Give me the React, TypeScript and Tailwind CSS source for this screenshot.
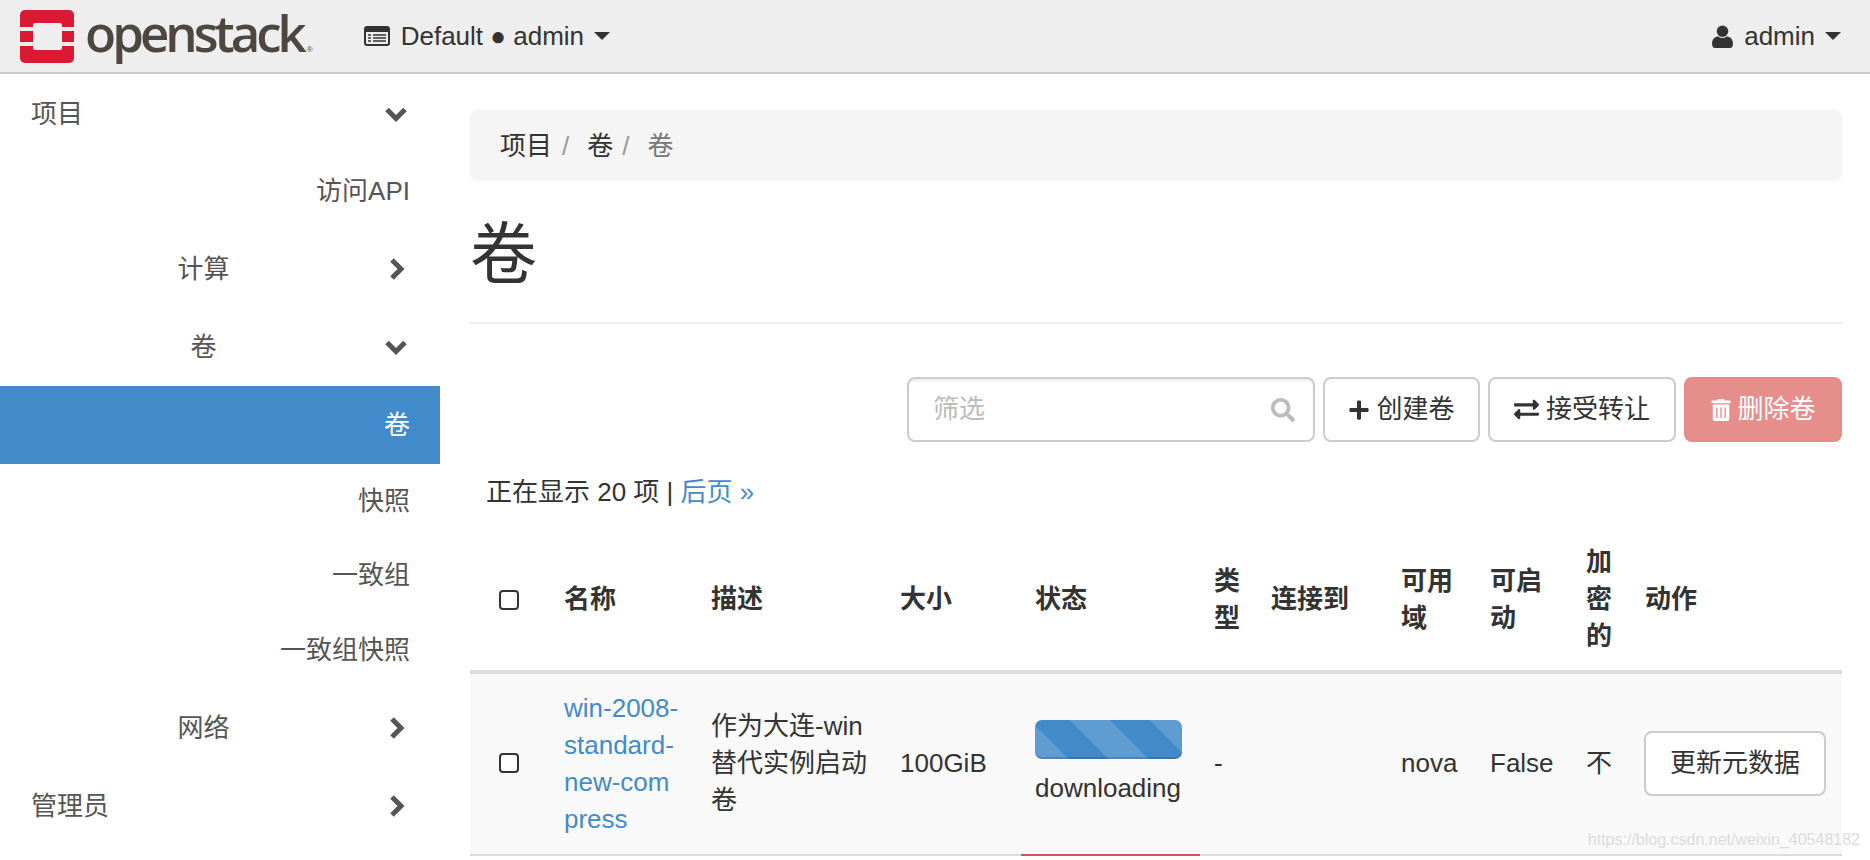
import { FaExchangeAlt, FaPlus, FaSearch, FaTrashAlt } from "react-icons/fa";

const ChevronDown = () => (
  <svg width="24" height="16" viewBox="0 0 24 16" className="shrink-0">
    <polyline points="3,3.5 12,12.5 21,3.5" fill="none" stroke="#555" strokeWidth="5" />
  </svg>
);

const ChevronRight = () => (
  <svg width="24" height="24" viewBox="0 0 24 24" className="shrink-0">
    <polyline points="8,3 17,12 8,21" fill="none" stroke="#555" strokeWidth="5" />
  </svg>
);

const Caret = () => (
  <span className="inline-block h-0 w-0 border-x-[8px] border-t-[8px] border-x-transparent border-t-[#333]" />
);

const Logo = () => (
  <svg width="54" height="53" viewBox="0 0 54 53" className="shrink-0">
    <rect x="0" y="0" width="54" height="53" rx="5" fill="#da1a32" />
    <rect x="13" y="13" width="29" height="27" rx="2" fill="#eee" />
    <rect x="0" y="17" width="14" height="4" fill="#eee" />
    <rect x="0" y="32" width="14" height="4" fill="#eee" />
    <rect x="41" y="17" width="13" height="4" fill="#eee" />
    <rect x="41" y="32" width="13" height="4" fill="#eee" />
  </svg>
);

const ListIcon = () => (
  <svg width="26" height="20" viewBox="0 0 26 20" className="shrink-0">
    <rect x="1" y="1" width="24" height="18" rx="2" fill="none" stroke="#333" strokeWidth="2" />
    <rect x="1" y="1" width="24" height="5" fill="#333" />
    <path d="M4 9h3M4 12h3M4 15h3M9 9h13M9 12h13M9 15h13" stroke="#333" strokeWidth="1.6" />
  </svg>
);

const UserIcon = () => (
  <svg width="21" height="23" viewBox="0 0 20 22" className="shrink-0">
    <circle cx="10" cy="6" r="5.5" fill="#333" />
    <path d="M0 18C0 13 3 11 6 11Q10 14 14 11C17 11 20 13 20 18Q20 22 17 22H3Q0 22 0 18Z" fill="#333" />
  </svg>
);

const Checkbox = () => (
  <input type="checkbox" className="block h-5 w-5 appearance-none rounded-[4px] border-2 border-[#333] bg-white" />
);

const subItemClass = "flex items-center justify-end pr-[30px] text-[#555]";

const Sidebar = () => (
  <aside className="mt-px w-[440px] shrink-0 text-[26px] leading-[37px]">
    <div className="flex h-[78px] items-center justify-between pl-[31px] pr-[32px] text-[#555]">
      <span>项目</span>
      <ChevronDown />
    </div>
    <div className={`h-[77px] ${subItemClass}`}>访问API</div>
    <div className="flex h-[78px] items-center pr-[32px] text-[#555]">
      <span className="flex-1 pl-[23px] text-center">计算</span>
      <ChevronRight />
    </div>
    <div className="flex h-[78px] items-center pr-[32px] text-[#555]">
      <span className="flex-1 pl-[23px] text-center">卷</span>
      <ChevronDown />
    </div>
    <div className="flex h-[78px] items-center justify-end bg-[#428bca] pr-[30px] text-white">卷</div>
    <div className={`h-[74px] ${subItemClass}`}>快照</div>
    <div className={`h-[74px] ${subItemClass}`}>一致组</div>
    <div className={`h-[77px] ${subItemClass}`}>一致组快照</div>
    <div className="flex h-[78px] items-center pr-[32px] text-[#555]">
      <span className="flex-1 pl-[23px] text-center">网络</span>
      <ChevronRight />
    </div>
    <div className="flex h-[78px] items-center justify-between pl-[31px] pr-[32px] text-[#555]">
      <span>管理员</span>
      <ChevronRight />
    </div>
  </aside>
);

const headers = ["名称", "描述", "大小", "状态", "类型", "连接到", "可用域", "可启动", "加密的", "动作"];

const VolumeTable = () => (
  <table className="mt-[19px] w-full table-fixed border-collapse text-left">
    <colgroup>
      <col className="w-[80px]" />
      <col className="w-[147px]" />
      <col className="w-[189px]" />
      <col className="w-[135px]" />
      <col className="w-[179px]" />
      <col className="w-[57px]" />
      <col className="w-[130px]" />
      <col className="w-[89px]" />
      <col className="w-[96px]" />
      <col className="w-[59px]" />
      <col className="w-[211px]" />
    </colgroup>
    <thead>
      <tr className="border-b-4 border-[#ddd]">
        <th className="pt-[14px] pb-[15px] pl-[29px]">
          <Checkbox />
        </th>
        {headers.map((h) => (
          <th key={h} className="px-[14px] pt-[14px] pb-[15px] font-bold">
            {h}
          </th>
        ))}
      </tr>
    </thead>
    <tbody>
      <tr className="bg-[#f9f9f9]">
        <td className="border-b-2 border-[#ddd] pb-[2px] pl-[29px]">
          <Checkbox />
        </td>
        <td className="border-b-2 border-[#ddd] px-[14px] py-[16px] text-[#428bca]">
          win-2008-
          <br />
          standard-
          <br />
          new-com
          <br />
          press
        </td>
        <td className="border-b-2 border-[#ddd] px-[14px] pb-[2px]">作为大连-win替代实例启动卷</td>
        <td className="border-b-2 border-[#ddd] px-[14px] pb-[2px]">100GiB</td>
        <td className="border-b-2 border-[#d9534f] px-[14px] pb-[2px]">
          <div className="h-[39px] w-[147px] rounded-[7px] bg-[#428bca] bg-[linear-gradient(45deg,rgba(255,255,255,.15)_25%,transparent_25%,transparent_50%,rgba(255,255,255,.15)_50%,rgba(255,255,255,.15)_75%,transparent_75%,transparent)] bg-[length:80px_80px] bg-[position:35px_0] shadow-[inset_0_-2px_0_rgba(0,0,0,0.15)]" />
          <div className="mt-[11px] whitespace-nowrap">downloading</div>
        </td>
        <td className="border-b-2 border-[#ddd] px-[14px] pb-[2px]">-</td>
        <td className="border-b-2 border-[#ddd] px-[14px]"></td>
        <td className="border-b-2 border-[#ddd] px-[14px] pb-[2px]">nova</td>
        <td className="border-b-2 border-[#ddd] px-[14px] pb-[2px]">False</td>
        <td className="border-b-2 border-[#ddd] px-[14px] pb-[2px]">不</td>
        <td className="border-b-2 border-[#ddd] pr-[14px] pb-[2px] pl-[13px]">
          <button className="h-[65px] w-[182px] rounded-[8px] border-2 border-[#ccc] bg-white text-[#333]">
            更新元数据
          </button>
        </td>
      </tr>
    </tbody>
  </table>
);

const App = () => {
  return (
    <div className="relative h-[860px] w-[1870px] overflow-hidden bg-white font-['Liberation_Sans','Noto_Sans_CJK_SC',sans-serif] text-[26px] leading-[37px] text-[#333]">
      {/* Top bar */}
      <header className="flex h-[74px] items-center border-b-2 border-[#ccc] bg-[#eee] pr-[29px] pl-[20px]">
        <Logo />
        <div className="mb-[8px] ml-[11px] flex items-baseline">
          <span className="font-['Open_Sans',sans-serif] text-[51px] leading-[64px] font-semibold tracking-[-4px] text-[#4d4740]">
            openstack
          </span>
          <span className="ml-[4px] text-[8px] leading-[8px] text-[#4d4740]">®</span>
        </div>
        <div className="ml-[51px] flex items-center">
          <ListIcon />
          <span className="ml-[11px]">Default ● admin</span>
          <span className="ml-[10px] flex">
            <Caret />
          </span>
        </div>
        <div className="ml-auto flex items-center">
          <UserIcon />
          <span className="ml-[11px]">admin</span>
          <span className="ml-[10px] flex">
            <Caret />
          </span>
        </div>
      </header>

      <div className="flex">
        <Sidebar />

        <main className="mr-[28px] min-w-0 flex-1 pt-[36px] pl-[30px]">
          {/* Breadcrumb */}
          <nav className="flex h-[71px] items-center rounded-[8px] bg-[#f5f5f5] px-[30px] pt-[2px]">
            <span>项目</span>
            <span className="mr-[18px] ml-[10px] text-[#999]">/</span>
            <span>卷</span>
            <span className="mr-[18px] ml-[9px] text-[#999]">/</span>
            <span className="text-[#777]">卷</span>
          </nav>

          <h1 className="mt-[38px] text-[67px] leading-[72px] font-normal">卷</h1>
          <hr className="mt-[31px] border-t-2 border-[#eee]" />

          {/* Toolbar */}
          <div className="mt-[53px] flex justify-end gap-[8px]">
            <div className="flex h-[65px] w-[408px] items-center rounded-[8px] border-2 border-[#ccc] pr-[18px] pl-[24px] shadow-[inset_0_2px_2px_rgba(0,0,0,0.08)]">
              <input
                placeholder="筛选"
                className="min-w-0 flex-1 bg-transparent outline-none placeholder:text-[#bbb]"
              />
              <FaSearch size={24} color="#bbb" />
            </div>
            <button className="flex h-[65px] w-[157px] items-center justify-center gap-[6px] rounded-[8px] border-2 border-[#ccc] bg-white text-[#333]">
              <FaPlus size={22} />
              创建卷
            </button>
            <button className="flex h-[65px] w-[188px] items-center justify-center gap-[7px] rounded-[8px] border-2 border-[#ccc] bg-white text-[#333]">
              <FaExchangeAlt size={25} />
              接受转让
            </button>
            <button className="flex h-[65px] w-[158px] items-center justify-center gap-[5px] rounded-[8px] border-2 border-[#e58a87] bg-[#e58e8c] text-white">
              <FaTrashAlt size={22} />
              删除卷
            </button>
          </div>

          <p className="mt-[32px] pl-[16px]">
            正在显示 20 项 | <span className="text-[#428bca]">后页 »</span>
          </p>

          <VolumeTable />
        </main>
      </div>

      {/* CSDN watermark */}
      <span className="absolute right-[10px] bottom-[10px] text-[16px] leading-[20px] text-[#dcdcdc]">
        https://blog.csdn.net/weixin_40548182
      </span>
    </div>
  );
};

export default App;
